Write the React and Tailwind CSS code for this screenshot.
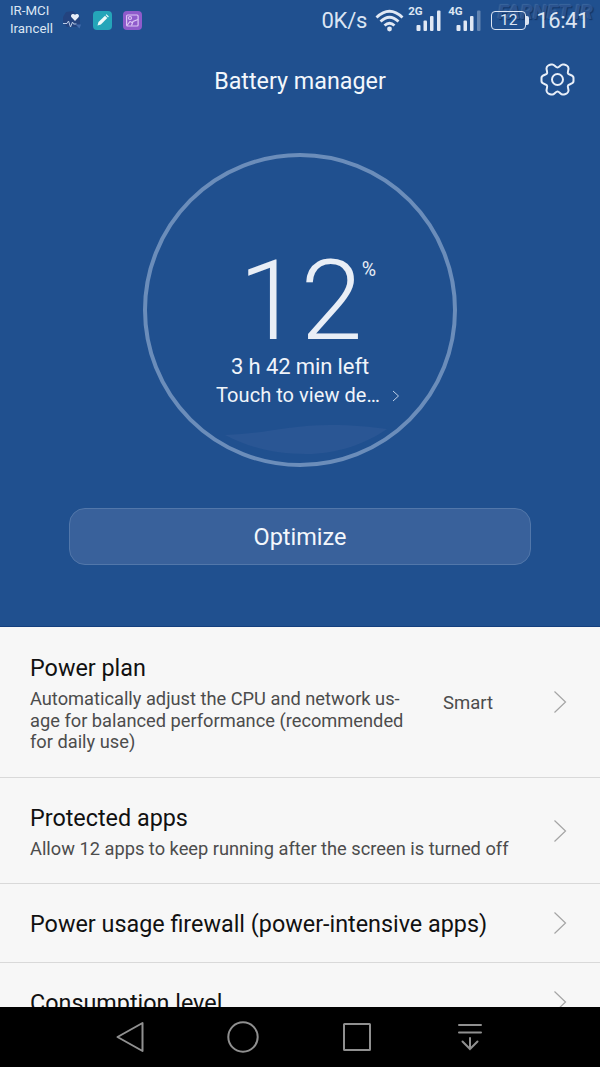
const plans = [
  {
    title: 'Power plan',
    lines: [
      'Automatically adjust the CPU and network us-',
      'age for balanced performance (recommended',
      'for daily use)',
    ],
    value: 'Smart',
    height: 'h-[151px]',
  },
  {
    title: 'Protected apps',
    lines: ['Allow 12 apps to keep running after the screen is turned off'],
    height: 'h-[106px]',
  },
  { title: 'Power usage firewall (power-intensive apps)', lines: [], height: 'h-[79px]' },
  { title: 'Consumption level', lines: [], height: 'h-[79px]' },
];

const Signal = ({ label, weak }) => (
  <div className="relative h-[23px] w-[25px]">
    <span className="absolute -left-[8px] -top-[3px] text-[11.5px] leading-none font-bold">{label}</span>
    <svg width="25" height="23" viewBox="0 0 25 23" fill="#e1e8f4">
      <rect x="0.5" y="16" width="4" height="6" rx="1" />
      <rect x="7.5" y="11.5" width="3.5" height="10.5" rx="1" />
      <rect x="14" y="7" width="3.5" height="15" rx="1" />
      <rect x="21" y="1.5" width="3.5" height="20.5" rx="1" opacity={weak ? 0.35 : 1} />
    </svg>
  </div>
);

const StatusBar = () => (
  <div className="relative flex h-10 items-center pl-[10px] text-[#dbe5f3]">
    <span className="absolute top-0 left-[498px] text-[20px] leading-6 font-bold italic tracking-[0.3px] text-[#2b538f] [text-shadow:-1px_-1px_1px_#4a72a6a0,1px_1px_1px_#10305fd0]">FARNET.IR</span>

    <div className="-mt-px w-[52px] text-[13.3px] leading-[18px] whitespace-nowrap">
      <div>IR-MCI</div>
      <div>Irancell</div>
    </div>

    {/* Notification icons */}
    <div className="flex items-center gap-[11px]">
      <svg width="20" height="20" viewBox="0 0 20 20" fill="none">
        <path d="M4 2l7-1 7 7v9H5L1 12V7z" fill="#23437f" />
        <path d="M1 13.5h4l1.5-2.5 2 6 2-5 1 2h3" stroke="#b9cae5" strokeWidth="1" />
        <path d="M13 11L9.5 7.2C7.8 5 11 2.6 13 4.8c2-2.2 5.2.2 3.5 2.4z" fill="#e8eef8" />
        <path d="M13.5 14.5h5.5l-1.5 4z" fill="#426bac" />
      </svg>
      <svg width="19" height="19" viewBox="0 0 19 19">
        <rect width="19" height="19" rx="4" fill="#25a5b9" />
        <path d="M4.5 14.5l1-3.5 6.5-6.2 2.3 2.3-6.4 6.4z" fill="#eefafa" />
        <path d="M12.7 4l.8-.7 2.3 2.3-.8.8z" fill="#eefafa" />
      </svg>
      <svg width="19" height="19" viewBox="0 0 19 19" fill="none" stroke="#dcc5f5" strokeWidth="1.2">
        <rect width="19" height="19" rx="4" fill="#8f5bcb" stroke="none" />
        <rect x="3.6" y="4" width="11.5" height="11" rx="1" />
        <circle cx="7" cy="7" r="1.5" />
        <path d="M4 14.5l3-4 2 1M8.500 14.500L10 10.500l5-2" />
      </svg>
    </div>

    <div className="relative ml-auto flex items-center pr-[11px]">
      <span className="pt-px text-[22px] leading-none tracking-[-0.2px]">0K/s</span>
      <svg className="ml-[8px]" width="29" height="23" viewBox="0 0 29 23" fill="none" stroke="#e1e8f4" strokeWidth="2.8">
        <path d="M1.5 8.5Q14.5-4 27.5 8.5" />
        <path d="M5.5 12.5Q14.5 4 23.5 12.5" />
        <path d="M9.5 16.5Q14.5 12 19.5 16.5" />
        <circle cx="14.5" cy="20" r="2.4" fill="#e1e8f4" stroke="none" />
      </svg>
      <div className="ml-[12px]"><Signal label="2G" /></div>
      <div className="ml-[15px]"><Signal label="4G" weak /></div>
      <div className="ml-[10px] flex items-center pt-px">
        <span className="flex h-[19px] w-[35px] items-center justify-center rounded-[4px] border-[1.5px] border-[#dbe5f3] text-[15.5px] leading-none">12</span>
        <span className="h-[9px] w-[3px] rounded-r-xs bg-[#dbe5f3]"></span>
      </div>
      <span className="ml-[7px] pt-px text-[22px] leading-none tracking-[-0.4px]">16:41</span>
    </div>
  </div>
);

const Chevron = () => (
  <svg width="14" height="24" viewBox="0 0 14 24" fill="none" stroke="#a5a5a5" strokeWidth="1.2">
    <path d="M1.5 1.5L12.5 12L1.5 22.5" />
  </svg>
);

const Header = () => (
  <div className="grid h-20 grid-cols-[1fr_auto_1fr] items-center pr-[25px] pl-[25px]">
    <h1 className="col-start-2 pt-[2px] text-[23.3px] leading-7 text-[#f3f7fc]">Battery manager</h1>
    <svg className="justify-self-end" width="35" height="34" viewBox="-17.5 -16.5 35 34" fill="none" stroke="#e7eef8" strokeWidth="2" strokeLinejoin="round">
      <path d="M0-12C2-12 3-15 5.200-15H6.500C8.500-14.600 11-13 11-11C11-9 9.700-7 10.600-5.800C11.600-4.600 16-4.500 16-1.800V1.800C16 4.500 11.600 4.600 10.600 5.800C9.700 7 11 9 11 11C11 13 8.500 14.600 6.500 15H5.200C3 15 2 12 0 12C-2 12-3 15-5.200 15H-6.500C-8.500 14.600-11 13-11 11C-11 9-9.700 7-10.600 5.800C-11.600 4.600-16 4.500-16 1.800V-1.800C-16-4.500-11.600-4.600-10.600-5.800C-9.700-7-11-9-11-11C-11-13-8.500-14.600-6.500-15H-5.200C-3-15-2-12 0-12Z" />
      <circle r="5.5" />
    </svg>
  </div>
);

const BatteryDial = () => (
  <div className="relative mx-auto mt-[33px] flex h-[314px] w-[314px] flex-col items-center rounded-full border-4 border-[#6b8dba] pt-[91px] text-[#f0f4fa]">
    {/* Remaining charge level */}
    <svg className="absolute bottom-[7px] left-[78px]" width="164" height="34" viewBox="0 0 164 34" fill="#2a5694">
      <path d="M0 13C40 12 64 3 105 3C130 3 145 5 162 7C140 22 112 32 81 32C51 32 25 26 0 13Z" />
    </svg>
    <div className="relative flex items-start text-[#e9eef6]">
      <span className="pl-px text-[112px] leading-[105px] font-light">12</span>
      <span className="absolute top-[10px] left-full -ml-px text-[19.5px] leading-6">%</span>
    </div>
    <div className="relative text-[22px] leading-[28px] tracking-[-0.1px]">3 h 42 min left</div>
    <div className="relative flex items-center pl-[16px] text-[20px] leading-[29px] tracking-[0.05px]">
      Touch to view de…
      <svg className="ml-[12px]" width="8" height="12" viewBox="0 0 8 12" fill="none" stroke="#bed0e8">
        <path d="M1 1l5.5 5L1 11" />
      </svg>
    </div>
  </div>
);

const Row = ({ title, lines, value, height }) => (
  <div className={`flex shrink-0 items-center border-b border-[#d9d9d9] pr-[33px] pl-[30px] ${height}`}>
    <div className="flex-1 pt-[2px] whitespace-nowrap">
      <div className="text-[23.35px] leading-[30px] text-[#111]">{title}</div>
      {lines.length > 0 && (
        <div className="mt-[5px] text-[18.25px] leading-[21.5px] text-[#4c4c4c]">
          {lines.map((line) => (
            <div key={line}>{line}</div>
          ))}
        </div>
      )}
    </div>
    {value && <span className="mr-[60px] pt-[3px] text-[18.5px] text-[#4c4c4c]">{value}</span>}
    <Chevron />
  </div>
);

const NavBar = () => (
  <div className="grid h-[60px] shrink-0 grid-cols-4 items-center justify-items-center bg-black px-[73px]">
    <svg width="32" height="34" viewBox="0 0 32 34" fill="none" stroke="#909090" strokeWidth="2" strokeLinejoin="round">
      <path d="M28.5 3v28L3.5 17z" />
    </svg>
    <svg width="34" height="34" viewBox="0 0 34 34" fill="none" stroke="#909090" strokeWidth="2">
      <circle cx="17" cy="17" r="14.7" />
    </svg>
    <svg width="34" height="34" viewBox="0 0 34 34" fill="none" stroke="#909090" strokeWidth="2">
      <rect x="4" y="4" width="26" height="26" rx="0.5" />
    </svg>
    <svg width="28" height="34" viewBox="0 0 28 34" fill="none" stroke="#909090" strokeWidth="2" strokeLinecap="round">
      <path d="M3 5h22M3 12.5h22M14 18v11M6.5 21.5L14 29l7.5-7.5" />
    </svg>
  </div>
);

const App = () => {
  return (
    <div className="flex h-[1067px] w-[600px] flex-col overflow-hidden bg-[#f7f7f7] font-['Roboto',sans-serif]">
      <div className="h-[627px] shrink-0 border-b border-[#143f7e] bg-[#20508f]">
        <StatusBar />
        <Header />
        <BatteryDial />
        <button className="mx-auto mt-[41px] block h-[57px] w-[462px] rounded-[16px] border border-[#5277aa] bg-[#39619b] pt-[2px] text-[23.5px] text-[#f3f7fc]">
          Optimize
        </button>
      </div>

      <div className="flex min-h-0 flex-1 flex-col overflow-hidden">
        {plans.map((plan) => (
          <Row key={plan.title} {...plan} />
        ))}
      </div>

      <NavBar />
    </div>
  );
};

export default App;
